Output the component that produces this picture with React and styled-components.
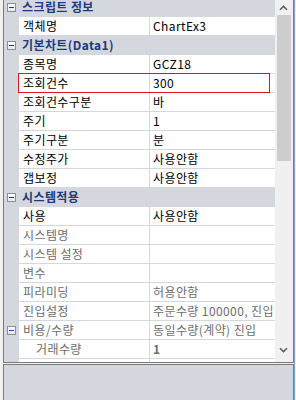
import React from 'react';
import styled, { createGlobalStyle } from 'styled-components';

const GlobalStyle = createGlobalStyle`
	html, body {
		margin: 0;
		padding: 0;
		background: #f0f0f0;
	}
	body {
		font-family: "Noto Sans CJK KR", "Noto Sans", sans-serif;
		font-size: 12px;
		letter-spacing: 0.4px;
	}
`;

const Ventana = styled.div`
	width: 296px;
	height: 400px;
	box-sizing: border-box;
	padding-left: 3px;
	display: flex;
	overflow: hidden;
`;

const Columna = styled.div`
	width: 291px;
	border-right: 1px solid #7fa7d6;
	display: flex;
	flex-direction: column;
`;

const Grilla = styled.div`
	height: 362px;
	display: flex;
	border-left: 1px solid #7a7a7a;
	border-right: 1px solid #7a7a7a;
	border-bottom: 1px solid #7a7a7a;
`;

const Lista = styled.div`
	width: 271px;
	overflow: hidden;
	background: #ffffff;
`;

const ListaInterior = styled.div`
	margin-top: -2px;
`;

const Fila = styled.div`
	position: relative;
	display: flex;
	height: 18px;
	border-bottom: 1px solid #d4d7de;
	background: ${p => (p.$categoria ? '#d4d7de' : '#ffffff')};
`;

const Canal = styled.div`
	width: 15px;
	flex: none;
	background: #d4d7de;
	display: flex;
	align-items: center;
	justify-content: center;
`;

const Menos = styled.span`
	width: 7px;
	height: 7px;
	border: 1px solid #8a8f99;
	background: linear-gradient(#ffffff, #e4e6ea);
	position: relative;
	&::after {
		content: '';
		position: absolute;
		left: 1px;
		right: 1px;
		top: 3px;
		height: 1px;
		background: ${p => (p.$azul ? '#2b4f9a' : '#333a48')};
	}
`;

const TituloCategoria = styled.div`
	padding-left: 3px;
	font-weight: 700;
	color: #1e3a78;
	line-height: 18px;
	white-space: nowrap;
`;

const Nombre = styled.div`
	width: 130px;
	flex: none;
	box-sizing: border-box;
	padding-left: ${p => (p.$sangria ? 17 : 4)}px;
	line-height: 18px;
	white-space: nowrap;
	overflow: hidden;
	color: ${p => (p.$apagado ? '#6d6d6d' : '#000000')};
`;

const Valor = styled.div`
	flex: none;
	width: 122px;
	padding-left: 3px;
	border-left: 1px solid #d4d7de;
	line-height: 18px;
	white-space: nowrap;
	overflow: hidden;
	color: ${p => (p.$apagado ? '#6d6d6d' : '#000000')};
	font-weight: ${p => (p.$negrita ? 700 : 400)};
`;

const Marca = styled.span`
	position: absolute;
	left: 14px;
	right: 5px;
	top: -1px;
	bottom: -1px;
	border: 1px solid #e0141e;
	pointer-events: none;
`;

const Barra = styled.div`
	width: 17px;
	background: #f0f0f0;
	display: flex;
	flex-direction: column;
`;

const Flecha = styled.div`
	height: 15px;
	display: flex;
	align-items: center;
	justify-content: center;
`;

const Pulgar = styled.div`
	height: 146px;
	margin: 0 1px 0 2px;
	background: #cdcdcd;
`;

const Hueco = styled.div`
	flex: 1;
`;

const PieBarra = styled.div`
	height: 5px;
`;

const Descripcion = styled.div`
	flex: 1;
	margin-top: 1px;
	border: 1px solid #7a7a7a;
	border-bottom: none;
	background: #d4d7de;
`;

const datos = [
	{ categoria: '스크립트 정보' },
	{ nombre: '객체명', valor: 'ChartEx3' },
	{ categoria: '기본차트(Data1)' },
	{ nombre: '종목명', valor: 'GCZ18' },
	{ nombre: '조회건수', valor: '300', marca: true },
	{ nombre: '조회건수구분', valor: '바' },
	{ nombre: '주기', valor: '1' },
	{ nombre: '주기구분', valor: '분' },
	{ nombre: '수정주가', valor: '사용안함' },
	{ nombre: '갭보정', valor: '사용안함' },
	{ categoria: '시스템적용' },
	{ nombre: '사용', valor: '사용안함' },
	{ nombre: '시스템명', valor: '', apagado: true },
	{ nombre: '시스템 설정', valor: '', apagado: true },
	{ nombre: '변수', valor: '', apagado: true },
	{ nombre: '피라미딩', valor: '허용안함', apagado: true },
	{ nombre: '진입설정', valor: '주문수량 100000, 진입', apagado: true },
	{ nombre: '비용/수량', valor: '동일수량(계약) 진입', apagado: true, abierto: true },
	{ nombre: '거래수량', valor: '1', apagado: true, sangria: true, negrita: true },
	{ nombre: '', valor: '' },
];

const Chevron = ({ abajo }) => (
	<svg width="9" height="6" viewBox="0 0 9 6">
		<path
			d={abajo ? 'M1 1.2 L4.5 4.6 L8 1.2' : 'M1 4.8 L4.5 1.4 L8 4.8'}
			fill="none"
			stroke="#606060"
			strokeWidth="1.6"
		/>
	</svg>
);

export default function App() {
	return (
		<Ventana>
			<GlobalStyle />
			<Columna>
				<Grilla>
					<Lista>
						<ListaInterior>
							{datos.map((d, i) =>
								d.categoria ? (
									<Fila key={i} $categoria>
										<Canal><Menos /></Canal>
										<TituloCategoria>{d.categoria}</TituloCategoria>
									</Fila>
								) : (
									<Fila key={i}>
										<Canal>{d.abierto ? <Menos $azul /> : null}</Canal>
										<Nombre $apagado={d.apagado} $sangria={d.sangria}>{d.nombre}</Nombre>
										<Valor $apagado={d.apagado} $negrita={d.negrita}>{d.valor}</Valor>
										{d.marca ? <Marca /> : null}
									</Fila>
								)
							)}
						</ListaInterior>
					</Lista>
					<Barra>
						<Flecha><Chevron /></Flecha>
						<Pulgar />
						<Hueco />
						<Flecha><Chevron abajo /></Flecha>
						<PieBarra />
					</Barra>
				</Grilla>
				<Descripcion />
			</Columna>
		</Ventana>
	);
}
